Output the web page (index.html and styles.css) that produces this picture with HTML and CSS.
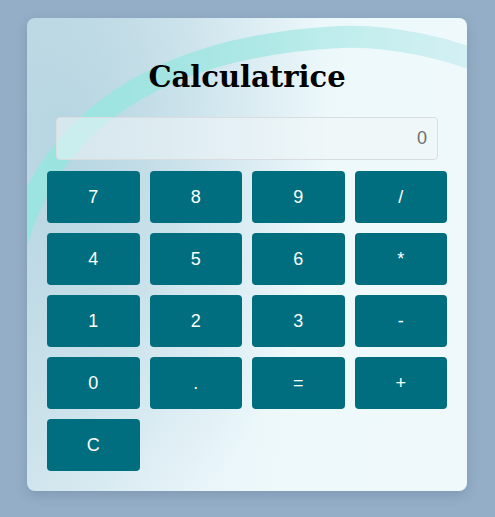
FILE: index.html
```html
<!DOCTYPE html>
<html lang="fr">
<head>
<meta charset="utf-8">
<title>Calculatrice</title>
<link rel="stylesheet" href="styles.css">
</head>
<body>
<div class="calculator">
  <svg class="swoosh" width="440" height="473" viewBox="0 0 440 473" aria-hidden="true">
    <defs>
      <linearGradient id="band" x1="0" y1="0" x2="440" y2="0" gradientUnits="userSpaceOnUse">
        <stop offset="0" stop-color="#95e6df" stop-opacity="0.85"/>
        <stop offset="0.55" stop-color="#9be6e1" stop-opacity="0.7"/>
        <stop offset="1" stop-color="#b5e6ea" stop-opacity="0.48"/>
      </linearGradient>
    </defs>
    <path d="M -16 248 C 8 130, 98 30, 313 19 C 360 16.6, 430 30, 480 56" fill="none" stroke="url(#band)" stroke-width="22"/>
  </svg>
  <h1 class="title">Calculatrice</h1>
  <input class="display" type="text" value="0" readonly>
  <div class="keys">
    <button class="key">7</button>
    <button class="key">8</button>
    <button class="key">9</button>
    <button class="key">/</button>
    <button class="key">4</button>
    <button class="key">5</button>
    <button class="key">6</button>
    <button class="key">*</button>
    <button class="key">1</button>
    <button class="key">2</button>
    <button class="key">3</button>
    <button class="key">-</button>
    <button class="key">0</button>
    <button class="key">.</button>
    <button class="key">=</button>
    <button class="key">+</button>
    <button class="key">C</button>
  </div>
</div>
</body>
</html>
```
FILE: styles.css
```css
html, body {
  margin: 0;
  padding: 0;
}
body {
  background: #95aec7;
  padding: 8px;
  font-family: "Liberation Sans", Arial, sans-serif;
}
.calculator {
  position: relative;
  overflow: hidden;
  box-sizing: border-box;
  width: 440px;
  margin: 10px 0 10px 19px;
  padding: 20px;
  border-radius: 8px;
  background:
    radial-gradient(ellipse 260px 420px at 40px 120px, rgba(180,212,224,0.9), rgba(180,212,224,0) 100%),
    linear-gradient(100deg, #c9e0e9 0%, #e6f3f8 40%, #eef9fb 65%, #eff9fb 100%);
  box-shadow: 0 4px 12px rgba(40, 60, 90, 0.18);
}
.swoosh {
  position: absolute;
  left: 0;
  top: 0;
  pointer-events: none;
}
.title {
  position: relative;
  margin: 21px 0 22px;
  font-family: "DejaVu Serif", Georgia, serif;
  font-size: 29px;
  line-height: 36px;
  font-weight: bold;
  text-align: center;
  color: #000;
}
.display {
  position: relative;
  display: block;
  box-sizing: border-box;
  width: 382px;
  height: 43px;
  margin: 0 auto 11px;
  padding: 0 10px;
  border: 1px solid #d9dde0;
  border-radius: 4px;
  background: rgba(240, 246, 248, 0.55);
  font-family: "Liberation Sans", Arial, sans-serif;
  font-size: 18px;
  color: #707070;
  text-align: right;
  outline: none;
}
.keys {
  position: relative;
  display: grid;
  grid-template-columns: repeat(4, 1fr);
  grid-auto-rows: 52px;
  gap: 10px;
}
.key {
  border: none;
  border-radius: 4px;
  background: #006e7f;
  color: #fff;
  font-family: "Liberation Sans", Arial, sans-serif;
  font-size: 18px;
  padding: 0;
}
```
